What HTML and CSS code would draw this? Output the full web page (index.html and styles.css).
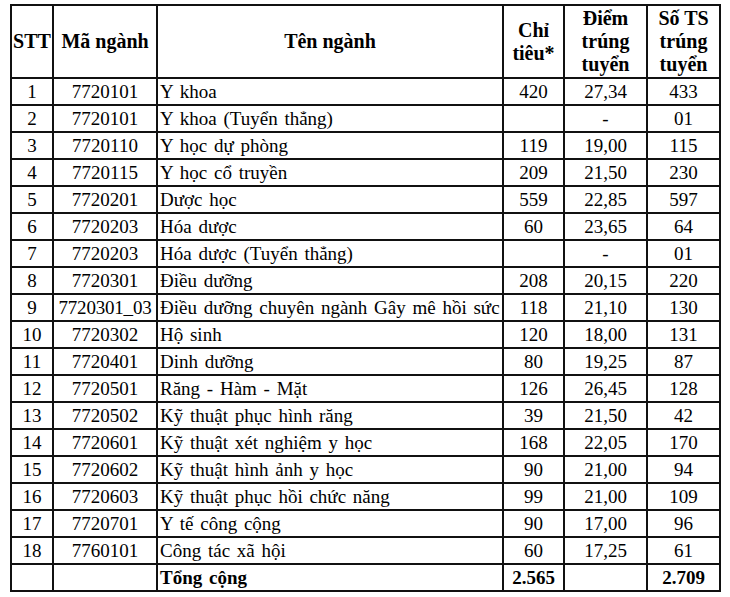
FILE: index.html
```html
<!DOCTYPE html>
<html lang="vi">
<head>
<meta charset="utf-8">
<title>Điểm trúng tuyển</title>
<link rel="stylesheet" href="styles.css">
</head>
<body>
<table class="scores">
  <colgroup>
    <col class="c-stt">
    <col class="c-ma">
    <col class="c-ten">
    <col class="c-chi">
    <col class="c-diem">
    <col class="c-so">
  </colgroup>
  <thead>
    <tr class="head">
      <th>STT</th>
      <th>Mã ngành</th>
      <th>Tên ngành</th>
      <th>Chỉ<br>tiêu*</th>
      <th>Điểm<br>trúng<br>tuyển</th>
      <th>Số TS<br>trúng<br>tuyển</th>
    </tr>
  </thead>
  <tbody>
    <tr><td>1</td><td>7720101</td><td class="name">Y khoa</td><td>420</td><td>27,34</td><td>433</td></tr>
    <tr><td>2</td><td>7720101</td><td class="name">Y khoa (Tuyển thẳng)</td><td></td><td>-</td><td>01</td></tr>
    <tr><td>3</td><td>7720110</td><td class="name">Y học dự phòng</td><td>119</td><td>19,00</td><td>115</td></tr>
    <tr><td>4</td><td>7720115</td><td class="name">Y học cổ truyền</td><td>209</td><td>21,50</td><td>230</td></tr>
    <tr><td>5</td><td>7720201</td><td class="name">Dược học</td><td>559</td><td>22,85</td><td>597</td></tr>
    <tr><td>6</td><td>7720203</td><td class="name">Hóa dược</td><td>60</td><td>23,65</td><td>64</td></tr>
    <tr><td>7</td><td>7720203</td><td class="name">Hóa dược (Tuyển thẳng)</td><td></td><td>-</td><td>01</td></tr>
    <tr><td>8</td><td>7720301</td><td class="name">Điều dưỡng</td><td>208</td><td>20,15</td><td>220</td></tr>
    <tr><td>9</td><td class="tight">7720301_03</td><td class="name">Điều dưỡng chuyên ngành Gây mê hồi sức</td><td>118</td><td>21,10</td><td>130</td></tr>
    <tr><td>10</td><td>7720302</td><td class="name">Hộ sinh</td><td>120</td><td>18,00</td><td>131</td></tr>
    <tr><td>11</td><td>7720401</td><td class="name">Dinh dưỡng</td><td>80</td><td>19,25</td><td>87</td></tr>
    <tr><td>12</td><td>7720501</td><td class="name">Răng - Hàm - Mặt</td><td>126</td><td>26,45</td><td>128</td></tr>
    <tr><td>13</td><td>7720502</td><td class="name">Kỹ thuật phục hình răng</td><td>39</td><td>21,50</td><td>42</td></tr>
    <tr><td>14</td><td>7720601</td><td class="name">Kỹ thuật xét nghiệm y học</td><td>168</td><td>22,05</td><td>170</td></tr>
    <tr><td>15</td><td>7720602</td><td class="name">Kỹ thuật hình ảnh y học</td><td>90</td><td>21,00</td><td>94</td></tr>
    <tr><td>16</td><td>7720603</td><td class="name">Kỹ thuật phục hồi chức năng</td><td>99</td><td>21,00</td><td>109</td></tr>
    <tr><td>17</td><td>7720701</td><td class="name">Y tế công cộng</td><td>90</td><td>17,00</td><td>96</td></tr>
    <tr><td>18</td><td>7760101</td><td class="name">Công tác xã hội</td><td>60</td><td>17,25</td><td>61</td></tr>
    <tr class="total"><td></td><td></td><td class="name">Tổng cộng</td><td>2.565</td><td></td><td>2.709</td></tr>
  </tbody>
</table>
</body>
</html>
```
FILE: styles.css
```css
html, body {
  margin: 0;
  padding: 0;
  background: #ffffff;
}

body {
  padding: 4px 0 0 10px;
  font-family: "Liberation Serif", "Times New Roman", serif;
  color: #000;
}

.scores {
  border-collapse: collapse;
  table-layout: fixed;
  width: 711px;
  border: 2px solid #111;
}

.c-stt { width: 42px; }
.c-ma { width: 104px; }
.c-ten { width: 346px; }
.c-chi { width: 61px; }
.c-diem { width: 83px; }
.c-so { width: 73px; }

.scores th,
.scores td {
  border: 2px solid #111;
  padding: 0;
  text-align: center;
  vertical-align: middle;
  white-space: nowrap;
}

.scores th {
  font-size: 20px;
  font-weight: bold;
  line-height: 23px;
}

.head {
  height: 73px;
}

.scores td {
  font-size: 19px;
  line-height: 22px;
  height: 25px;
}

.scores td.name {
  text-align: left;
  padding-left: 2px;
  word-spacing: 2px;
}

.scores td.tight {
  letter-spacing: -0.2px;
}

.total td {
  font-weight: bold;
}
```
